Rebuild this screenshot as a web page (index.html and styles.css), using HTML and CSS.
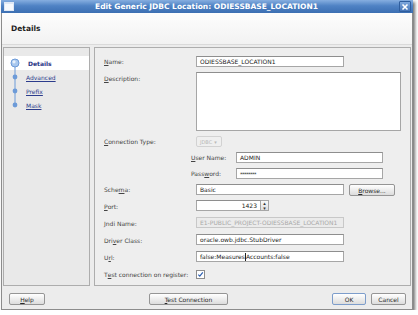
FILE: index.html
```html
<!DOCTYPE html>
<html lang="en">
<head>
    <meta charset="UTF-8">
    <title>Edit Generic JDBC Location</title>
    <link rel="stylesheet" href="styles.css">
</head>
<body>
    <div class="window">
        <!-- Title bar -->
        <div class="titlebar">
            <span class="win-icon"></span>
            <span class="title">Edit Generic JDBC Location: ODIESSBASE_LOCATION1</span>
            <span class="close-btn">
                <svg width="8" height="8" viewBox="0 0 8 8"><path d="M1.5 1.5 L6.5 6.5 M6.5 1.5 L1.5 6.5" stroke="#fff" stroke-width="1.6"/></svg>
            </span>
        </div>

        <div class="header">Details</div>

        <div class="main">
            <!-- Train navigation -->
            <div class="train">
                <div class="step current">
                    <svg class="stop" width="12" height="14" viewBox="0 0 12 14">
                        <line x1="6" y1="7" x2="6" y2="14" stroke="#6d9bd8" stroke-width="1"/>
                        <circle cx="6" cy="7" r="4" fill="#a9c8ee" stroke="#6d9bd8" stroke-width="1"/>
                        <circle cx="5" cy="5.8" r="1.6" fill="#e6f0fb"/>
                    </svg>
                    <span>Details</span>
                </div>
                <div class="step">
                    <svg class="stop" width="12" height="14" viewBox="0 0 12 14">
                        <line x1="6" y1="0" x2="6" y2="14" stroke="#6d9bd8" stroke-width="1"/>
                        <circle cx="6" cy="7" r="2.4" fill="#6d9bd8"/>
                    </svg>
                    <a href="#">Advanced</a>
                </div>
                <div class="step">
                    <svg class="stop" width="12" height="14" viewBox="0 0 12 14">
                        <line x1="6" y1="0" x2="6" y2="14" stroke="#6d9bd8" stroke-width="1"/>
                        <circle cx="6" cy="7" r="2.4" fill="#6d9bd8"/>
                    </svg>
                    <a href="#">Prefix</a>
                </div>
                <div class="step">
                    <svg class="stop" width="12" height="14" viewBox="0 0 12 14">
                        <line x1="6" y1="0" x2="6" y2="7" stroke="#6d9bd8" stroke-width="1"/>
                        <circle cx="6" cy="7" r="2.4" fill="#6d9bd8"/>
                    </svg>
                    <a href="#">Mask</a>
                </div>
            </div>

            <!-- Form -->
            <div class="panel">
                <div class="form">
                    <label><u>N</u>ame:</label>
                    <div class="field w148">ODIESSBASE_LOCATION1</div>

                    <label class="top"><u>D</u>escription:</label>
                    <div class="field area"></div>

                    <label><u>C</u>onnection Type:</label>
                    <div class="combo">JDBC <span class="caret">&#9662;</span></div>

                    <div class="sub">
                        <label class="sublabel"><u>U</u>ser Name:</label>
                        <div class="field w147">ADMIN</div>
                    </div>

                    <div class="sub">
                        <label class="sublabel">Pass<u>w</u>ord:</label>
                        <div class="field w147 dots">********</div>
                    </div>

                    <label>Sche<u>m</u>a:</label>
                    <div class="inline">
                        <div class="field w148">Basic</div>
                        <button class="btn browse"><u>B</u>rowse...</button>
                    </div>

                    <label><u>P</u>ort:</label>
                    <div class="spinner">
                        <div class="field num">1423</div>
                        <div class="spin">
                            <span>&#9652;</span>
                            <span>&#9662;</span>
                        </div>
                    </div>

                    <label>Jndi Name:</label>
                    <div class="field w148 disabled">E1-PUBLIC_PROJECT-ODIESSBASE_LOCATION1</div>

                    <label>Dri<u>v</u>er Class:</label>
                    <div class="field w148">oracle.owb.jdbc.StubDriver</div>

                    <label>U<u>r</u>l:</label>
                    <div class="field w148">false:Measures<span class="cursor"></span>Accounts:false</div>

                    <label class="wide">T<u>e</u>st connection on register:</label>
                    <div class="check">
                        <svg width="7" height="7" viewBox="0 0 7 7"><path d="M1.3 3.6 L2.8 5.2 L5.8 1.4" fill="none" stroke="#2d5fb0" stroke-width="1.2"/></svg>
                    </div>
                </div>
            </div>
        </div>

        <div class="footer">
            <button class="btn help"><u>H</u>elp</button>
            <button class="btn test"><u>T</u>est Connection</button>
            <button class="btn ok">OK</button>
            <button class="btn cancel">Cancel</button>
        </div>
    </div>
</body>
</html>
```

FILE: styles.css
```css
body {
    margin: 0;
    padding: 0 0 0 1px;
    background: #ffffff;
    font-family: "DejaVu Sans", sans-serif;
    font-size: 6px;
    color: #333333;
}

.window {
    width: 410px;
    height: 309px;
    border: 1px solid #8c8c8c;
    border-top: none;
    background: #ececec;
    display: flex;
    flex-direction: column;
    box-shadow: 2px 2px 3px rgba(0, 0, 0, 0.55);
}

/* Title bar */
.titlebar {
    height: 13px;
    flex: none;
    display: flex;
    align-items: center;
    padding: 0 2px;
    background: linear-gradient(#86aee0, #4f82c4 45%, #3c6fb2);
    margin: 0 -1px;
}

.win-icon {
    width: 8px;
    height: 6px;
    border: 1px solid #dfe8f5;
    border-top-width: 2px;
    background: #f7f9fc;
    margin-left: 1px;
}

.title {
    flex: 1;
    text-align: center;
    color: #ffffff;
    font-weight: bold;
    font-size: 7.5px;
}

.close-btn {
    width: 10px;
    height: 9px;
    display: flex;
    align-items: center;
    justify-content: center;
    background: linear-gradient(#7fa8dd, #4676b8);
    border: 1px solid #2f5e9e;
    border-radius: 1px;
}

.header {
    height: 31px;
    flex: none;
    display: flex;
    align-items: center;
    padding-left: 9px;
    font-weight: bold;
    font-size: 7.5px;
    color: #1e1e1e;
    background: linear-gradient(#fdfdfd, #f2f2f2);
    border-bottom: 1px solid #dadada;
}

.main {
    flex: none;
    height: 239px;
    display: flex;
    gap: 4px;
    padding: 2px 1px 0 1px;
}

/* Train */
.train {
    width: 85px;
    border: 1px solid #adadad;
    background: #e9e9e9;
    padding-top: 8px;
}

.step {
    height: 14px;
    display: flex;
    align-items: center;
    padding-left: 5px;
    gap: 5px;
}

.step.current {
    background: #ffffff;
}

.step span {
    font-weight: bold;
    color: #1f3384;
    margin-left: 2px;
}

.step a {
    color: #2c3c8c;
    text-decoration: underline;
}

/* Form panel */
.panel {
    flex: 1;
    border: 1px solid #adadad;
    background: #eeeeee;
}

.form {
    display: grid;
    grid-template-columns: 92px auto;
    grid-template-rows: 11px 59px 11px 11px 11px 11px 12px 12px 12px 12px 12px;
    row-gap: 5px;
    justify-content: start;
    padding: 8px 0 0 9px;
}

.form label {
    display: flex;
    align-items: center;
    color: #444444;
}

.form label.top {
    align-items: flex-start;
    padding-top: 3px;
}

.form label.wide {
    white-space: nowrap;
}

.field {
    height: 11px;
    box-sizing: border-box;
    background: #ffffff;
    border: 1px solid #a6a6a6;
    border-top-color: #8e8e8e;
    padding: 0 3px;
    display: flex;
    align-items: center;
    color: #222222;
    white-space: nowrap;
    overflow: hidden;
}

.w148 {
    width: 148px;
}

.w147 {
    width: 147px;
}

.area {
    width: 205px;
    height: 59px;
}

.dots {
    letter-spacing: -0.5px;
    font-size: 5px;
}

.disabled {
    background: #ebebeb;
    border-color: #c8c8c8;
    color: #a9a9a9;
}

.cursor {
    display: inline-block;
    width: 1px;
    height: 8px;
    background: #222222;
}

.combo {
    width: 26px;
    height: 11px;
    box-sizing: border-box;
    border: 1px solid #d2d2d2;
    border-radius: 2px;
    background: #efefef;
    color: #b8b8b8;
    font-size: 5px;
    display: flex;
    align-items: center;
    padding-left: 3px;
    gap: 2px;
}

.sub {
    grid-column: 1 / -1;
    display: flex;
    align-items: center;
    padding-left: 87px;
}

.form .sublabel {
    width: 45px;
    height: 100%;
}

.inline {
    display: flex;
    gap: 5px;
}

.spinner {
    display: flex;
    width: 73px;
    height: 11px;
}

.num {
    width: 65px;
    justify-content: flex-end;
}

.spin {
    width: 8px;
    display: flex;
    flex-direction: column;
    border: 1px solid #a6a6a6;
    border-left: none;
    box-sizing: border-box;
    background: linear-gradient(#fafafa, #dedede);
    font-size: 5px;
    line-height: 4.5px;
    text-align: center;
    color: #333333;
}

.check {
    width: 7px;
    height: 7px;
    align-self: center;
    border: 1px solid #8d8d8d;
    background: #ffffff;
    display: flex;
}

/* Buttons */
.btn {
    height: 12px;
    box-sizing: border-box;
    padding: 0;
    font-family: "DejaVu Sans", sans-serif;
    font-size: 6px;
    color: #2a2a2a;
    background: linear-gradient(#ffffff, #dcdcdc);
    border: 1px solid #959595;
    border-radius: 2px;
}

.browse {
    width: 46px;
}

.footer {
    flex: 1;
    display: flex;
    align-items: flex-start;
    padding: 7px 6px 0 7px;
}

.help {
    width: 36px;
}

.test {
    width: 79px;
    margin-left: 104px;
}

.ok {
    width: 34px;
    margin-left: auto;
    border-color: #7d9dcb;
}

.cancel {
    width: 35px;
    margin-left: 5px;
}
```
